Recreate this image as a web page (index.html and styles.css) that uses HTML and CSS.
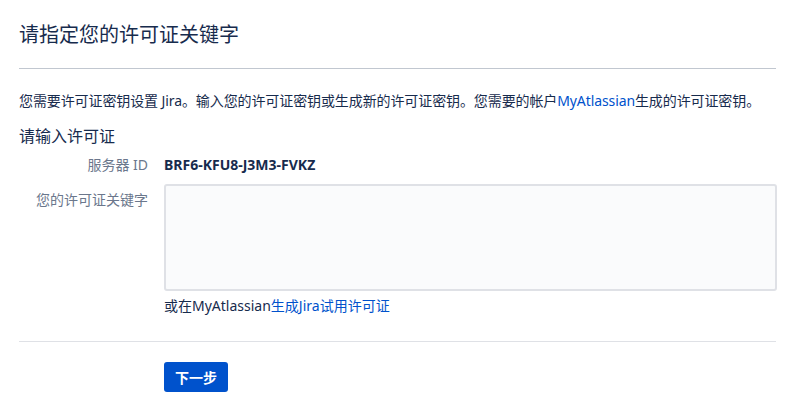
FILE: index.html
```html
<!DOCTYPE html>
<html lang="zh-CN">
<head>
<meta charset="utf-8">
<title>请指定您的许可证关键字</title>
<link rel="stylesheet" href="styles.css">
</head>
<body>
<div class="page">
  <h1 class="title">请指定您的许可证关键字</h1>
  <hr class="rule-top">
  <p class="intro">您需要许可证密钥设置 Jira。输入您的许可证密钥或生成新的许可证密钥。您需要的帐户<a href="#">MyAtlassian</a>生成的许可证密钥。</p>
  <h2 class="subtitle">请输入许可证</h2>
  <div class="form">
    <div class="label">服务器 ID</div>
    <div class="value">BRF6-KFU8-J3M3-FVKZ</div>
    <label class="label label-key" for="key">您的许可证关键字</label>
    <div class="field">
      <textarea id="key" class="textarea"></textarea>
      <div class="help">或在MyAtlassian<a href="#">生成Jira试用许可证</a></div>
    </div>
  </div>
  <hr class="rule-bottom">
  <div class="actions">
    <button class="btn" type="button">下一步</button>
  </div>
</div>
</body>
</html>
```

FILE: styles.css
```css
* { box-sizing: border-box; }
html, body { margin: 0; padding: 0; background: #fff; }
body {
  font-family: "Noto Sans", "Noto Sans CJK SC", sans-serif;
  color: #172b4d;
  font-size: 14px;
}
a { color: #0052cc; text-decoration: none; }
.page { padding: 21px 19px 0; }
.title {
  margin: 0;
  font-size: 20px;
  font-weight: 400;
  line-height: 28px;
  color: #172b4d;
}
.rule-top {
  margin: 19px 0 0;
  border: 0;
  border-top: 1px solid #c1c7d0;
  height: 0;
}
.intro {
  margin: 22px 0 0;
  font-size: 14px;
  line-height: 20px;
  letter-spacing: -0.1px;
}
.subtitle {
  margin: 15px 0 0;
  font-size: 16px;
  font-weight: 400;
  line-height: 20px;
}
.form {
  display: grid;
  grid-template-columns: 145px 1fr;
  row-gap: 9px;
  margin-top: 9px;
}
.label {
  text-align: right;
  padding-right: 16px;
  color: #6b778c;
  font-size: 14px;
  line-height: 20px;
}
.label-key { padding-top: 6px; }
.value {
  font-weight: 700;
  font-size: 14px;
  line-height: 20px;
  color: #172b4d;
}
.field { display: flex; flex-direction: column; }
.textarea {
  display: block;
  width: 613px;
  height: 107px;
  margin: 0;
  background: #fafbfc;
  border: 2px solid #dfe1e6;
  border-radius: 3px;
  resize: none;
  font: inherit;
}
.help {
  margin-top: 5px;
  line-height: 20px;
  font-size: 14px;
}
.rule-bottom {
  margin: 25px 0 0;
  border: 0;
  border-top: 1px solid #dfe1e6;
  height: 0;
}
.actions {
  padding-left: 145px;
  margin-top: 20px;
}
.btn {
  width: 64px;
  height: 30px;
  background: #0052cc;
  color: #fff;
  border: 0;
  border-radius: 3px;
  font-family: inherit;
  font-size: 14px;
  font-weight: 700;
  padding: 0;
}
```
